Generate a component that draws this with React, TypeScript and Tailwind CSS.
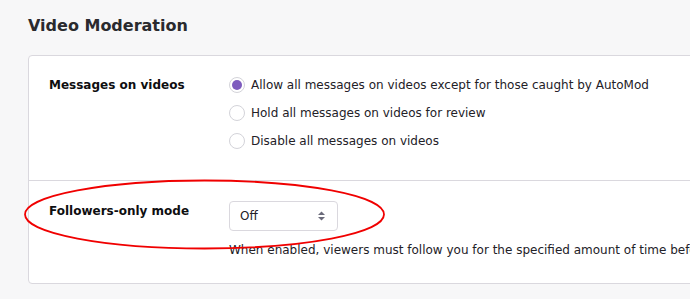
import React from "react";

const font = { fontFamily: '"DejaVu Sans", sans-serif' };

function Radio({ checked, label }: { checked?: boolean; label: string }) {
  return (
    <div className="flex items-center h-[28px]">
      <span className="w-[16px] h-[16px] rounded-full border border-[#d3d3d9] bg-white flex items-center justify-center shrink-0">
        {checked && <span className="w-[10px] h-[10px] rounded-full bg-[#7d5bbe]" />}
      </span>
      <span className="ml-[6px] text-[12px] text-[#232127]">{label}</span>
    </div>
  );
}

export default function App() {
  return (
    <div className="relative w-[690px] h-[299px] bg-[#f7f7f8] overflow-hidden" style={font}>
      <div className="pl-[28px] pt-[15px]">
        <h1 className="text-[16px] font-bold text-[#2a2a2e] leading-[22px]">Video Moderation</h1>
        <div className="mt-[18px] w-[700px] bg-white border border-[#dad8de] rounded-[4px]">
          <div className="flex pl-[20px] pt-[15px] pb-[25px] border-b border-[#dad8de]">
            <div className="w-[180px] shrink-0 pt-[6px] text-[12px] font-bold text-[#0e0e10] leading-[16px]">Messages on videos</div>
            <div className="flex flex-col">
              <Radio checked label="Allow all messages on videos except for those caught by AutoMod" />
              <Radio label="Hold all messages on videos for review" />
              <Radio label="Disable all messages on videos" />
            </div>
          </div>
          <div className="flex pl-[20px] pt-[20px] pb-[25px]">
            <div className="w-[180px] shrink-0 pt-[2px] text-[12px] font-bold text-[#0e0e10] leading-[16px]">Followers-only mode</div>
            <div className="flex flex-col min-w-0">
              <div className="w-[109px] h-[30px] border border-[#dad8de] rounded-[4px] bg-white flex items-center justify-between pl-[10px] pr-[11px]">
                <span className="text-[12px] text-[#232127]">Off</span>
                <svg width="9" height="10" viewBox="0 0 9 10">
                  <path d="M4.5 0.5 L8 4 L1 4 Z" fill="#6b6b7a" />
                  <path d="M4.5 9.5 L8 6 L1 6 Z" fill="#6b6b7a" />
                </svg>
              </div>
              <div className="mt-[11px] text-[12px] text-[#232127] whitespace-nowrap leading-[16px]">
                When enabled, viewers must follow you for the specified amount of time before they can chat.
              </div>
            </div>
          </div>
        </div>
      </div>
      <svg className="absolute left-0 top-0 pointer-events-none" width="690" height="299">
        <ellipse cx="204.5" cy="214.5" rx="179.5" ry="34" fill="none" stroke="#f00000" strokeWidth="1.8" />
      </svg>
    </div>
  );
}
